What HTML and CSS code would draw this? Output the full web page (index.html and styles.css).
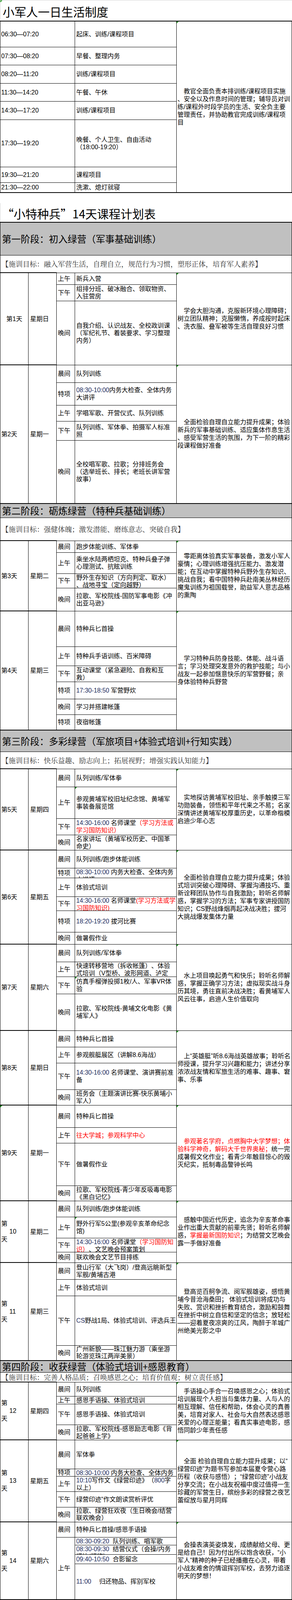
FILE: index.html
```html
<!DOCTYPE html>
<html lang="zh-CN">
<head>
<meta charset="utf-8">
<title>小特种兵14天课程计划表</title>
<link rel="stylesheet" href="styles.css">
</head>
<body>
<div class="sheet-title m">小军人一日生活制度</div>
<table class="sched">
<colgroup><col class="c-time"><col class="c-act"><col class="c-desc"></colgroup>
<tr class="h66"><td class="time">06:30—07:20</td><td class="act">起床、训练/课程项目</td><td class="desc m" rowspan="8">　教官全面负责本排训练/课程项目实施、安全以及作息时间的管理；辅导员对训练/课程外时段学员的生活、安全负主要管理责任，并协助教官完成训练/课程项目</td></tr>
<tr class="h46"><td class="time">07:30—08:20</td><td class="act">早餐、整理内务</td></tr>
<tr class="h47"><td class="time">08:20—11:20</td><td class="act">训练/课程项目</td></tr>
<tr class="h46"><td class="time">11:30—14:20</td><td class="act">午餐、午休</td></tr>
<tr class="h47"><td class="time">14:30—17:20</td><td class="act">训练/课程项目</td></tr>
<tr class="h121"><td class="time">17:30—19:20</td><td class="act">晚餐、个人卫生、自由活动<span class="nw">（18:00-19:20）</span></td></tr>
<tr class="h40"><td class="time">19:30—21:20</td><td class="act">课程项目</td></tr>
<tr class="h26"><td class="time">21:30—22:00</td><td class="act">洗漱、熄灯就寝</td></tr>
</table>
<div class="gap"></div>
<div class="plan-title"><span class="q">“</span>小特种兵<span class="q">”</span>14天课程计划表</div>
<table class="plan">
<colgroup><col class="c-day"><col class="c-wk"><col class="c-slot"><col class="c-act"><col class="c-desc"></colgroup>

<tr class="h84 phase"><td colspan="5">第一阶段：初入绿营（军事基础训练）</td></tr>
<tr class="h45 aim"><td colspan="5">【施训目标：融入军营生活，自理自立，规范行为习惯，塑形正体，培育军人素养】</td></tr>

<tr class="h30"><td class="day ctr" rowspan="3">第1天</td><td class="wk" rowspan="3">星期日</td><td class="slot">上午</td><td class="act">新兵入营</td><td class="desc m" rowspan="3">　学会大胆沟通，克服新环境心理障碍；树立团队精神；克服懒惰，养成按时起床、洗衣服、叠军被等生活自理良好习惯</td></tr>
<tr class="h42"><td class="slot">下午</td><td class="act">组排分班、破冰融合、领取物资、入驻营房</td></tr>
<tr class="h164"><td class="slot">晚间</td><td class="act">自我介绍、认识战友、全校政训课（军纪礼节、着装要求、学习整理内务）</td></tr>

<tr class="h45"><td class="day" rowspan="5">第2天</td><td class="wk" rowspan="5">星期一</td><td class="slot">晨间</td><td class="act">队列训练</td><td class="desc m" rowspan="5">　全面检验自理自立能力提升成果；体验新兵的军事基础训练、适应集体作息生活、感受军营生活的氛围，为下一阶的精彩段课程做好准备</td></tr>
<tr class="h58"><td class="slot">特项</td><td class="act"><span class="tm">08:30-10:00</span>内务大检查、全体内务大讲评</td></tr>
<tr class="h41"><td class="slot">上午</td><td class="act">学唱军歌、开营仪式、队列训练</td></tr>
<tr class="h49"><td class="slot">下午</td><td class="act">队列训练、军体拳、拍摄军人标准照</td></tr>
<tr class="h162"><td class="slot">晚间</td><td class="act">全校唱军歌、拉歌；分排班务会（选举班长、排长；老班长讲军营故事）</td></tr>

<tr class="h36 phase"><td colspan="5">第二阶段：砺炼绿营（特种兵基础训练）</td></tr>
<tr class="h59 aim"><td colspan="5">【施训目标：强健体魄；激发潜能、磨练意志、突破自我】</td></tr>

<tr class="h30"><td class="day" rowspan="4">第3天</td><td class="wk" rowspan="4">星期二</td><td class="slot">晨间</td><td class="act">跑步体能训练、军体拳</td><td class="desc m" rowspan="4">　零距离体验真实军事装备，激发小军人豪情；心理训练增强抗压能力、激发潜<br>能；在互动中掌握特种兵野外生存知识、挑战自我；看中国特种兵赴南美丛林经历魔鬼训练为祖国载誉，助益军人意志品格的熏陶</td></tr>
<tr class="h54"><td class="slot">上午</td><td class="act">乘坐水陆两栖坦克、特种兵叠子弹心理测试、抗眩训练</td></tr>
<tr class="h37"><td class="slot">下午</td><td class="act any"><div class="clip k36">野外生存知识（方向判定、取水）、战地寻宝（定向越野）</div></td></tr>
<tr class="h59"><td class="slot">晚间</td><td class="act">拉歌、军校院线-国防军事电影《冲出亚马逊》</td></tr>

<tr class="h91"><td class="day" rowspan="6">第4天</td><td class="wk" rowspan="6">星期三</td><td class="slot">晨间</td><td class="act">特种兵匕首操</td><td class="desc m" rowspan="6">　学习特种兵防身技能、体能、战斗语<br>言；学习处理突发意外的救护技能；与小战友一起参加惬意快乐的军营野餐；亲<br>身体验特种兵野营</td></tr>
<tr class="h49"><td class="slot">上午</td><td class="act">特种兵手语训练、百米障碍</td></tr>
<tr class="h41"><td class="slot">下午</td><td class="act">互动课堂（紧急避险、自救和互救）</td></tr>
<tr class="h44"><td class="slot">特项</td><td class="act"><span class="tm">17:30-18:50</span> 军营野炊</td></tr>
<tr class="h40"><td class="slot">晚间</td><td class="act">学习并搭建帐篷</td></tr>
<tr class="h40"><td class="slot">特项</td><td class="act">夜宿帐篷</td></tr>

<tr class="h55 phase"><td colspan="5">第三阶段：多彩绿营（军旅项目+体验式培训+行知实践）</td></tr>
<tr class="h44 aim"><td colspan="5">【施训目标：快乐益趣、励志向上；拓展视野；增强实践认知能力】</td></tr>

<tr class="h46"><td class="day" rowspan="4">第5天</td><td class="wk" rowspan="4">星期四</td><td class="slot">晨间</td><td class="act">队列训练/军体拳</td><td class="desc m" rowspan="4">　实地探访黄埔军校旧址、亲手触摸三军功勋装备，领悟和平年代来之不易；名家深情讲述黄埔军校厚重历史，以革命楷模启迪少年心志</td></tr>
<tr class="h81"><td class="slot">上午</td><td class="act m">参观黄埔军校旧址纪念馆、黄埔军事装备展览馆</td></tr>
<tr class="h42"><td class="slot">下午</td><td class="act"><span class="tm">14:30-16:00</span> 名师课堂<span class="red">（学习方法或学习国防知识）</span></td></tr>
<tr class="h39"><td class="slot">晚间</td><td class="act">名家讲坛（黄埔军校历史、中国革命史）</td></tr>

<tr class="h46"><td class="day" rowspan="6">第6天</td><td class="wk" rowspan="6">星期五</td><td class="slot">晨间</td><td class="act">队列训练/跑步体能训练</td><td class="desc m" rowspan="6">　全面检验自理自立能力提升成果；体验式培训突破心理障碍、掌握沟通技巧、重新诠释团队协作与自我激励；聆听名师解惑，掌握学习的方法；军事专家讲授国防知识；CS野战烽烟再起决战决胜；拔河大挑战爆发集体力量</td></tr>
<tr class="h25"><td class="slot">特项</td><td class="act"><div class="clip k24"><span class="tm">08:30-10:00</span> 内务大检查、全体内务大讲评</div></td></tr>
<tr class="h48"><td class="slot">上午</td><td class="act">体验式培训</td></tr>
<tr class="h36"><td class="slot">下午</td><td class="act"><div class="clip k35"><span class="tm">14:30-16:00</span> 名师课堂<span class="red">(学习方法或学习国防知识)</span></div></td></tr>
<tr class="h55"><td class="slot">特项</td><td class="act"><span class="tm">18:20-19:20</span> 拔河比赛</td></tr>
<tr class="h31"><td class="slot">晚间</td><td class="act">做暑假作业</td></tr>

<tr class="h45"><td class="day" rowspan="4">第7天</td><td class="wk" rowspan="4">星期六</td><td class="slot">晨间</td><td class="act">队列训练/军体拳</td><td class="desc m" rowspan="4">　水上项目唤起勇气和快乐；聆听名师解惑，掌握正确学习方法；虚拟现实战斗身历其境，勇往直前决战决胜；看黄埔军人风云往事，启迪人生价值取向</td></tr>
<tr class="h38"><td class="slot">上午</td><td class="act"><div class="clip k37">快速转移营地（拆收帐篷）、体验式培训（V型桥、波形网道、泸定桥）</div></td></tr>
<tr class="h44"><td class="slot">下午</td><td class="act m">仿真手榴弹投掷1枚/人、军事VR体验</td></tr>
<tr class="h94"><td class="slot">晚间</td><td class="act">拉歌、军校院线-黄埔文化电影《黄埔军人》</td></tr>

<tr class="h42"><td class="day" rowspan="4">第8天</td><td class="wk" rowspan="4">星期日</td><td class="slot">晨间</td><td class="act">特种兵匕首操</td><td class="desc m" rowspan="4">　上“英雄艇”听8.6海战英雄故事；聆听名师授课，提升学习兴趣和能力；讲述分享浓浓战友情和军旅生活的难事、趣事、窘事、乐事</td></tr>
<tr class="h41"><td class="slot">上午</td><td class="act">参观舰艇展区（讲解8.6海战）</td></tr>
<tr class="h68"><td class="slot">下午</td><td class="act"><span class="tm">14:30-16:00</span> 名师课堂、演讲赛前准备</td></tr>
<tr class="h40"><td class="slot">晚间</td><td class="act">班务会（主题演讲比赛-快乐黄埔小军人）</td></tr>

<tr class="h57"><td class="day m" rowspan="4">第9天</td><td class="wk" rowspan="4">星期一</td><td class="slot">晨间</td><td class="act">特种兵匕首操</td><td class="desc m" rowspan="4"><span class="red">　参观著名学府，点燃胸中大学梦想；体验科学神奇，解码大千世界奥秘；</span>统一完成暑假文化作业；看青少年触目惊心的毁灭纪实，抵制毒品警钟长鸣</td></tr>
<tr class="h40"><td class="slot">上午</td><td class="act red">往大学城；参观科学中心</td></tr>
<tr class="h109"><td class="slot">下午</td><td class="act">做暑假作业</td></tr>
<tr class="h39"><td class="slot">晚间</td><td class="act">拉歌、军校院线-青少年反吸毒电影《黑白记忆》</td></tr>

<tr class="h41"><td class="day multi" rowspan="4">第<br><span class="dn">10</span><br>天</td><td class="wk" rowspan="4">星期二</td><td class="slot">晨间</td><td class="act">队列训练/跑步体能训练</td><td class="desc m" rowspan="4">　感触中国近代历史，追念为辛亥革命事业作出重大贡献的前辈先贤；聆听名师解惑，<span class="red">掌握最新国防知识</span>；为结营文艺晚会露一手做好准备</td></tr>
<tr class="h54"><td class="slot">上午</td><td class="act m">野外行军5公里(参观辛亥革命纪念馆)</td></tr>
<tr class="h36"><td class="slot">下午</td><td class="act"><div class="clip k35"><span class="tm">14:30-16:00</span> 名师课堂<span class="red">（学习国防知识）</span>、文艺晚会预案策划</div></td></tr>
<tr class="h27"><td class="slot">晚间</td><td class="act">联欢晚会文艺节目排练</td></tr>

<tr class="h43"><td class="day multi" rowspan="4">第<br><span class="dn">11</span><br>天</td><td class="wk" rowspan="4">星期三</td><td class="slot">晨间</td><td class="act">登山行军（大飞岗）/登高远眺新型军舰/黄埔古港</td><td class="desc m" rowspan="4">　登高览百舸争流、阅军舰雄姿，感悟黄埔今昔沧海桑田； 体验式培训将成功与失败、赏识和挫折教育结合，激励和鼓舞在挫折中树立自信和坚定的信念；放轻松——迎着夏夜凉爽的江风，陶醉于羊城广州绝美光影之中</td></tr>
<tr class="h42"><td class="slot">上午</td><td class="act">体验式培训</td></tr>
<tr class="h127"><td class="slot">下午</td><td class="act"><span class="tm">CS</span>野战1局、体验式培训、评选兵王</td></tr>
<tr class="h39"><td class="slot">晚间</td><td class="act tight">广州新貌——珠江魅力游（乘坐游轮游览珠江两岸美景）</td></tr>

<tr class="h30 phase"><td colspan="5">第四阶段：收获绿营（体验式培训+感恩教育）</td></tr>
<tr class="h25 aim"><td colspan="5">【施训目标：完善人格品质；召唤感恩之心；培育价值观；树立责任感】</td></tr>

<tr class="h36"><td class="day multi" rowspan="4">第<br><span class="dn">12</span><br>天</td><td class="wk" rowspan="4">星期四</td><td class="slot">晨间</td><td class="act">队列训练</td><td class="desc m" rowspan="4">　手语操心手合一召唤感恩之心；体验式培训展现个人担当与集体力量、人与人的相互理解、信任和帮助，体会心灵的真善美，培育对家人、社会与大自然表达感恩关爱的心理正能量；看真实事迹电影，感悟同龄少年责任感</td></tr>
<tr class="h20"><td class="slot">上午</td><td class="act">感恩手语操、体验式培训</td></tr>
<tr class="h53"><td class="slot">下午</td><td class="act">感恩手语操、体验式培训</td></tr>
<tr class="h39"><td class="slot">晚间</td><td class="act">拉歌、军校院线-感恩励志电影《背起爸爸上学》</td></tr>

<tr class="h74"><td class="day multi" rowspan="5">第<br><span class="dn">13</span><br>天</td><td class="wk" rowspan="5">星期五</td><td class="slot">晨间</td><td class="act">军体拳</td><td class="desc m" rowspan="5">　全面 检验自理自立能力提升成果；以“绿营印迹”为题书写参加本届夏令营心路历程（收获与感悟）；“绿营印迹”小战友分享交流；在小战友祝福中度过值得一生珍藏的军营生日，缤纷多彩的绿营之夜艺蕾绽放与星月同辉</td></tr>
<tr class="h19"><td class="slot tight">特项</td><td class="act"><div class="clip k17"><span class="tm">08:30-10:00</span> 内务大检查、全体内务大讲评</div></td></tr>
<tr class="h39"><td class="slot">上午</td><td class="act"><span class="tm">10:10</span>写作文《绿营印迹》（<span class="tm">800</span>字以上）</td></tr>
<tr class="h40"><td class="slot">下午</td><td class="act">绿营印迹”作文朗读赏析评优</td></tr>
<tr class="h38"><td class="slot">晚间</td><td class="act tight">拉歌、绿营狂欢夜（生日晚会/结营联欢晚会）</td></tr>

<tr class="h39"><td class="day multi" rowspan="5">第<br><span class="dn">14</span><br>天</td><td class="wk" rowspan="5">星期六</td><td class="slot">晨间</td><td class="act">特种兵匕首操/感恩手语操</td><td class="desc m" rowspan="5">　会操表演英姿焕发，成绩献给父母、更是给自己！因为付出所以饱含收获，“小军人”精神的种子已经播撒在心灵，带着小战友难舍的情谊挥别军校，去努力追逐明天的梦想！</td></tr>
<tr class="h20"><td class="slot" rowspan="4">上午</td><td class="act"><span class="tm">08:30-09:20</span>&nbsp; 队列训练、唱军歌</td></tr>
<tr class="h24"><td class="act"><div class="clip k23"><span class="tm">08:30-09:30</span>&nbsp; 结营仪式（会操/内务评比/颁奖）</div></td></tr>
<tr class="h24"><td class="act"><span class="tm">09:40-10:50</span>&nbsp; 合影留念</td></tr>
<tr class="h92"><td class="act"><span class="tm">11:00</span>　 归还物品、挥别军校</td></tr>
</table>
<div class="note m">备注：本计划可能因天气及其它不确定因素而发生变化，请以带排教官实际操作为准。</div>
</body>
</html>
```

FILE: styles.css
```css
* { box-sizing: border-box; }
html, body { margin: 0; padding: 0; background: #fff; }
body {
  width: 747px;
  font-family: "Liberation Sans", "Noto Sans CJK SC", sans-serif;
  font-size: 16px;
  line-height: 19px;
  color: #000;
  text-spacing-trim: space-all;
  text-autospace: no-autospace;
}

.sheet-title {
  position: relative;
  height: 53px;
  padding: 4px 0 0 6px;
  border-top: 1px solid #d4d4d4;
  border-left: 1px solid #d4d4d4;
  font-family: "Noto Sans CJK SC", sans-serif;
  font-size: 30px;
  line-height: 48px;
}

.gap { height: 26px; }

.plan-title {
  height: 48px;
  padding: 4px 0 0 4px;
  border-left: 1px solid #d4d4d4;
  font-family: "Noto Sans CJK SC", sans-serif;
  font-size: 30px;
  line-height: 44px;
}
.plan-title .q { font-feature-settings: "fwid" 1; }
.nw { white-space: nowrap; }

table {
  border-collapse: collapse;
  table-layout: fixed;
  width: 746px;
  border: 2px solid #000;
  border-left-width: 1px;
}
td {
  border: 1px solid #000;
  padding: 0 2px 0 3px;
  vertical-align: middle;
  overflow: hidden;
}

.c-time { width: 191px; }
.c-day { width: 72px; }
.c-wk { width: 72px; }
.c-slot { width: 47px; }
.c-act { width: 260px; }
.c-desc { width: 295px; }

.time { padding-left: 2px; }
.act { padding: 0 1px 0 3px; }
.tight { line-height: 18px; }
.desc {
  padding: 0 1px 0 2px;
  line-height: 20px;
  line-break: anywhere;
}
.any { line-break: anywhere; }

.day {
  padding-left: 2px;
  border-top: 2px solid #000;
}
.day.ctr { text-align: center; }
.day.multi { line-height: 20px; }
.dn { display: inline-block; padding-left: 21px; }
.wk {
  padding-left: 4px;
  border-top: 2px solid #000;
}
.slot { padding-left: 3px; }

.phase td {
  border-top: 2px solid #000;
  background: #c0c0c0;
  font-family: "Noto Sans CJK SC", sans-serif;
  font-size: 24px;
  line-height: 28px;
  padding-left: 4px;
}
.aim td {
  font-family: "Noto Serif CJK SC", "Noto Sans CJK SC", serif;
  font-size: 18px;
  line-height: 22px;
  color: #333;
  padding-left: 3px;
}

.tm { color: #1f2f5f; letter-spacing: -0.1px; }
.red { color: #ff0000; }

.clip { overflow: hidden; }
.k17 { height: 17px; }
.k23 { height: 23px; }
.k24 { height: 24px; }
.k35 { height: 35px; }
.k36 { height: 36px; }
.k37 { height: 37px; }

.note {
  position: relative;
  height: 39px;
  padding: 12px 0 0 10px;
  font-family: "Noto Sans CJK SC", sans-serif;
  font-size: 16px;
  line-height: 20px;
}

.m { position: relative; }
.m::before {
  content: "";
  position: absolute;
  top: 0;
  left: 0;
  border-top: 5px solid #1e9a1e;
  border-right: 5px solid transparent;
}

.h19 { height: 19px; }
.h20 { height: 20px; }
.h24 { height: 24px; }
.h25 { height: 25px; }
.h26 { height: 26px; }
.h27 { height: 27px; }
.h30 { height: 30px; }
.h31 { height: 31px; }
.h36 { height: 36px; }
.h37 { height: 37px; }
.h38 { height: 38px; }
.h39 { height: 39px; }
.h40 { height: 40px; }
.h41 { height: 41px; }
.h42 { height: 42px; }
.h43 { height: 43px; }
.h44 { height: 44px; }
.h45 { height: 45px; }
.h46 { height: 46px; }
.h47 { height: 47px; }
.h48 { height: 48px; }
.h49 { height: 49px; }
.h53 { height: 53px; }
.h54 { height: 54px; }
.h55 { height: 55px; }
.h57 { height: 57px; }
.h58 { height: 58px; }
.h59 { height: 59px; }
.h66 { height: 66px; }
.h68 { height: 68px; }
.h74 { height: 74px; }
.h81 { height: 81px; }
.h84 { height: 84px; }
.h91 { height: 91px; }
.h92 { height: 92px; }
.h94 { height: 94px; }
.h109 { height: 109px; }
.h121 { height: 121px; }
.h127 { height: 127px; }
.h162 { height: 162px; }
.h164 { height: 164px; }
```
